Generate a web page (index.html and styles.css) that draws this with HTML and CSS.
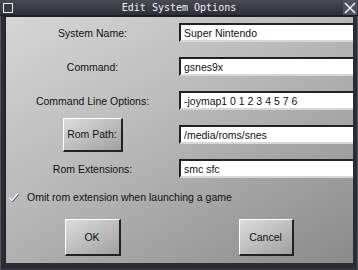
FILE: index.html
```html
<!DOCTYPE html>
<html>
<head>
  <title>Edit System Options</title>
  <link rel="stylesheet" href="styles.css">
</head>
<body>
  <div class="window">
    <div class="titlebar">
      <span class="win-icon"></span>
      <span class="title">Edit System Options</span>
      <span class="close">
        <svg width="12" height="12" viewBox="0 0 12 12">
          <path d="M1 1 L11 11 M11 1 L1 11" stroke="#f0f0f0" stroke-width="1.6" fill="none"/>
        </svg>
      </span>
    </div>
    <div class="frame">
      <div class="content">
        <div class="form">
          <label class="label">System Name:</label>
          <input class="field" type="text" value="Super Nintendo">

          <label class="label">Command:</label>
          <input class="field" type="text" value="gsnes9x">

          <label class="label">Command Line Options:</label>
          <input class="field" type="text" value="-joymap1 0 1 2 3 4 5 7 6">

          <div class="label"><button class="button rom">Rom Path:</button></div>
          <input class="field" type="text" value="/media/roms/snes">

          <label class="label">Rom Extensions:</label>
          <input class="field" type="text" value="smc sfc">
        </div>

        <div class="check">
          <svg class="tick" width="11" height="10" viewBox="0 0 11 10">
            <path d="M1.5 5.5 L4 8.5 L10 1.5" stroke="#555" stroke-width="1.6" fill="none" transform="translate(0.6,0.6)"/>
            <path d="M1.5 5.5 L4 8.5 L10 1.5" stroke="#fafafa" stroke-width="1.4" fill="none"/>
          </svg>
          <span>Omit rom extension when launching a game</span>
        </div>

        <div class="actions">
          <div class="cell"><button class="button big">OK</button></div>
          <div class="cell"><button class="button big cancel">Cancel</button></div>
        </div>
      </div>
    </div>
  </div>
</body>
</html>
```

FILE: styles.css
```css
body {
  margin: 0;
  background-color: #000;
  font-family: "Liberation Sans", Arial, sans-serif;
}

.window {
  width: 358px;
  height: 270px;
  display: flex;
  flex-direction: column;
  background-color: #2c2c34;
  overflow: hidden;
}

.titlebar {
  height: 15px;
  display: flex;
  align-items: center;
  background: linear-gradient(#4a4a55, #2e2e38);
  border-bottom: 1px solid #1c1c22;
  color: #f2f2f2;
}

.win-icon {
  width: 8px;
  height: 8px;
  margin-left: 3px;
  border: 1.5px solid #eee;
  background-color: #3a3a44;
}

.title {
  flex: 1;
  text-align: center;
  font-family: "DejaVu Sans Mono", monospace;
  font-size: 10px;
  padding-left: 2px;
}

.close {
  width: 14px;
  height: 15px;
  display: flex;
  align-items: center;
  justify-content: center;
  background-color: #505060;
  margin-right: 1px;
}

.frame {
  flex: 1;
  padding: 0 5px 6px 5px;
  display: flex;
  border-bottom: 1px solid #3c3c46;
  box-shadow: inset 1px 0 0 #55555f, inset -1px 0 0 #55555f;
}

.content {
  flex: 1;
  background: linear-gradient(150deg, #d6d6d6 0%, #b8b8b8 45%, #8a8a8a 100%);
  border-left: 1px solid #1e1e24;
  border-top: 1px solid #1e1e24;
  padding-top: 6px;
}

.form {
  display: grid;
  grid-template-columns: 173px 1fr;
  grid-auto-rows: 19px;
  row-gap: 15px;
  column-gap: 0;
  align-items: center;
}

.label {
  font-size: 10.5px;
  color: #111;
  text-align: center;
  display: flex;
  justify-content: center;
  align-items: center;
}

.field {
  box-sizing: border-box;
  height: 19px;
  width: 100%;
  margin: 0;
  padding: 0 3px;
  font-family: "Liberation Sans", Arial, sans-serif;
  font-size: 10.5px;
  color: #111;
  background-color: #fff;
  border-style: solid;
  border-width: 2px 0 2px 2px;
  border-color: #222 #ccc #d8d8d8 #222;
  outline: none;
}

.button {
  box-sizing: border-box;
  font-family: "Liberation Sans", Arial, sans-serif;
  font-size: 10.5px;
  color: #111;
  background: linear-gradient(150deg, #dcdcdc, #a0a0a0);
  border-style: solid;
  border-width: 1px 2px 2px 1px;
  border-color: #fff #222 #222 #fff;
  padding: 0;
  cursor: pointer;
}

.button.rom {
  width: 60px;
  height: 34px;
}

.check {
  display: flex;
  align-items: center;
  height: 20px;
  margin-top: 9px;
  padding-left: 2px;
  font-size: 10.5px;
  color: #111;
}

.tick {
  margin-right: 8px;
}

.actions {
  display: grid;
  grid-template-columns: 173px 1fr;
  margin-top: 12px;
}

.cell {
  display: flex;
  justify-content: center;
}

.button.big {
  width: 56px;
  height: 37px;
}

.button.cancel {
  width: 55px;
}
```
